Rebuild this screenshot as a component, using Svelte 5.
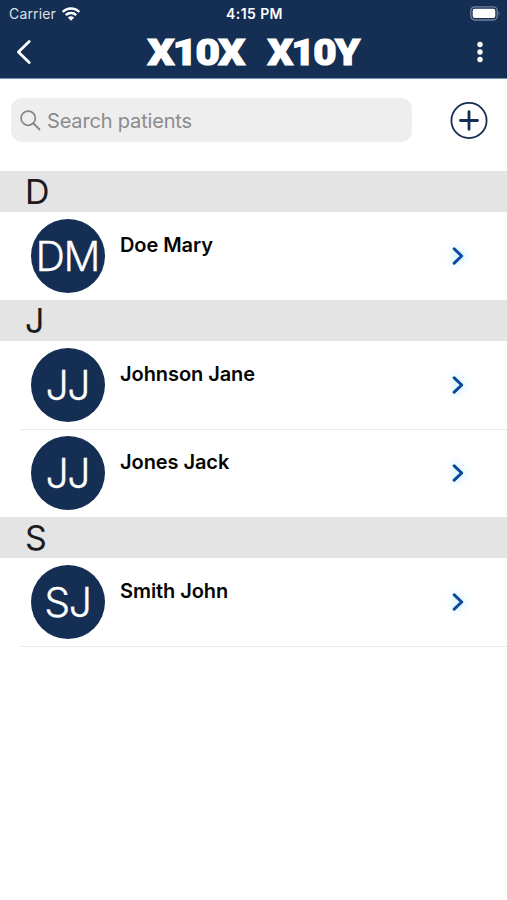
<script>
  let search = $state('');

  const sections = [
    { letter: 'D', patients: [{ name: 'Doe Mary', initials: 'DM' }] },
    {
      letter: 'J',
      patients: [
        { name: 'Johnson Jane', initials: 'JJ' },
        { name: 'Jones Jack', initials: 'JJ' }
      ]
    },
    { letter: 'S', patients: [{ name: 'Smith John', initials: 'SJ' }] }
  ];
</script>

<div class="screen">
  <header>
    <div class="status">
      <div class="carrier">
        <span>Carrier</span>
        <svg width="20" height="14" viewBox="0 0 20 14" fill="none" stroke="#fff" stroke-width="2.5">
          <path d="M1.7 5C6.2 .4 13.8 .4 18.3 5" />
          <path d="M4.8 8.2C7.6 5.4 12.4 5.4 15.2 8.2" />
          <path d="M10 13.7L6.8 10.5Q10 7.8 13.2 10.5Z" fill="#fff" stroke="none" />
        </svg>
      </div>
      <span class="time">4:15 PM</span>
      <svg class="battery" width="31" height="15" viewBox="0 0 31 15">
        <rect x=".8" y=".8" width="26.4" height="13.2" rx="4" fill="none" stroke="#75839b" stroke-width="1.3" />
        <rect x="2.7" y="2.7" width="22.6" height="9.4" rx="2" fill="#fff" />
        <path d="M28.6 5.2Q30.5 7.4 28.6 9.6Z" fill="#75839b" />
      </svg>
    </div>

    <nav>
      <button aria-label="Back">
        <svg width="16" height="26" viewBox="0 0 16 26" fill="none" stroke="#fff" stroke-width="2.8" stroke-linecap="round" stroke-linejoin="round">
          <path d="M13.2 2.5L2.4 13L13.2 23.5" />
        </svg>
      </button>
      <svg class="logo" width="216" height="48" viewBox="0 -8 216 48">
        <text x="2.5" y="29" textLength="96" lengthAdjust="spacingAndGlyphs">X10X</text>
        <text x="122.5" y="29" textLength="91" lengthAdjust="spacingAndGlyphs">X10Y</text>
      </svg>
      <button aria-label="More">
        <svg width="8" height="22" viewBox="0 0 8 22" fill="#fff">
          <circle cx="4" cy="3.5" r="2.7" />
          <circle cx="4" cy="11" r="2.7" />
          <circle cx="4" cy="18.5" r="2.7" />
        </svg>
      </button>
    </nav>
  </header>

  <div class="toolbar">
    <label class="search">
      <svg width="21" height="21" viewBox="0 0 21 21" fill="none" stroke="#858587" stroke-width="1.7" stroke-linecap="round">
        <circle cx="8.2" cy="8.2" r="7.1" />
        <path d="M13.4 13.4L19.4 19.4" stroke-width="2" />
      </svg>
      <input type="text" placeholder="Search patients" bind:value={search} />
    </label>
    <button aria-label="Add patient">
      <svg width="38" height="38" viewBox="0 0 38 38" fill="none" stroke="#152e54">
        <circle cx="19" cy="19.5" r="17.6" stroke-width="1.8" />
        <path d="M10.5 19.5H27.5M19 10.7V28.3" stroke-width="2.8" stroke-linecap="round" />
      </svg>
    </button>
  </div>

  {#each sections as section, i}
    <h2>{section.letter}</h2>
    <ul class:last={i === sections.length - 1}>
      {#each section.patients as patient}
        <li>
          <div class="avatar">{patient.initials}</div>
          <span class="name">{patient.name}</span>
          <svg class="chevron" width="14" height="20" viewBox="0 0 14 20" fill="none" stroke="#0b4a9c" stroke-width="3" stroke-linecap="round" stroke-linejoin="round">
            <path d="M3.2 2.8L10.7 10L3.2 17.2" />
          </svg>
        </li>
      {/each}
    </ul>
  {/each}
</div>

<style>
  :global(body){
    margin: 0;
    background: white;
  }

  .screen{
    width: 507px;
    height: 900px;
    overflow: hidden;
    font-family: Inter, "Liberation Sans", sans-serif;
    color: #050505;
  }

  header{
    box-sizing: border-box;
    height: 79px;
    background: #152e54;
    border-bottom: 1px solid #7294b0;
    color: white;
  }

  button{
    display: flex;
    padding: 0;
    border: none;
    background: none;
    cursor: pointer;
  }

  .status{
    display: grid;
    grid-template-columns: 1fr auto 1fr;
    align-items: center;
    height: 27px;
    padding: 0 6px 0 8px;
    font-size: 14px;
    line-height: 27px;
  }

  .carrier{
    display: flex;
    align-items: center;
    gap: 5px;
    padding-left: 1px;
    letter-spacing: 0.15px;
    color: #dce1e8;
  }

  .time{
    font-weight: 600;
    letter-spacing: 0.4px;
  }

  .battery{
    justify-self: end;
  }

  nav{
    display: flex;
    align-items: center;
    justify-content: space-between;
    height: 50px;
    padding: 0 23px 0 16px;
  }

  .logo{
    margin-left: -2px;
    overflow: visible;
  }

  .logo text{
    font-family: Roboto, Inter, sans-serif;
    font-size: 36.5px;
    font-weight: 900;
    letter-spacing: -1.5px;
    fill: white;
    stroke: white;
    stroke-width: 1.2px;
  }

  .toolbar{
    display: flex;
    align-items: center;
    justify-content: space-between;
    height: 82px;
    padding: 0 19px 10px 11px;
  }

  .search{
    box-sizing: border-box;
    display: flex;
    align-items: center;
    gap: 6px;
    width: 401px;
    height: 44px;
    padding: 1px 0 0 9px;
    border-radius: 11px;
    background: #eeeeef;
  }

  input{
    flex: 1;
    padding: 1px 0 0;
    border: none;
    outline: none;
    background: none;
    font: 20px Inter, "Liberation Sans", sans-serif;
    letter-spacing: -0.17px;
  }

  input::placeholder{
    color: #8b8b8d;
    opacity: 1;
  }

  h2{
    height: 41px;
    margin: 0;
    padding-left: 25px;
    background: #e4e4e4;
    color: #1c1c1c;
    font-size: 34px;
    font-weight: 400;
    line-height: 41px;
    letter-spacing: -0.5px;
  }

  ul{
    margin: 0;
    padding: 0 0 0 20px;
    list-style: none;
  }

  li{
    display: flex;
    align-items: center;
    height: 88px;
    padding: 0 42px 0 11px;
    box-shadow: 0 1px #e9e9e9;
  }

  ul:not(.last) li:last-child{
    box-shadow: none;
  }

  .avatar{
    width: 74px;
    height: 74px;
    border-radius: 50%;
    background: #152e54;
    color: white;
    font-size: 41px;
    font-weight: 300;
    line-height: 74px;
    letter-spacing: -1.4px;
    text-indent: -1.4px;
    text-align: center;
    -webkit-text-stroke: 0.3px white;
  }

  .name{
    flex: 1;
    margin: -22px 0 0 15px;
    font-size: 20px;
    font-weight: 600;
    letter-spacing: -0.07px;
  }

  .chevron{
    overflow: visible;
    filter: drop-shadow(0 0 5px #8edcff);
  }
</style>
